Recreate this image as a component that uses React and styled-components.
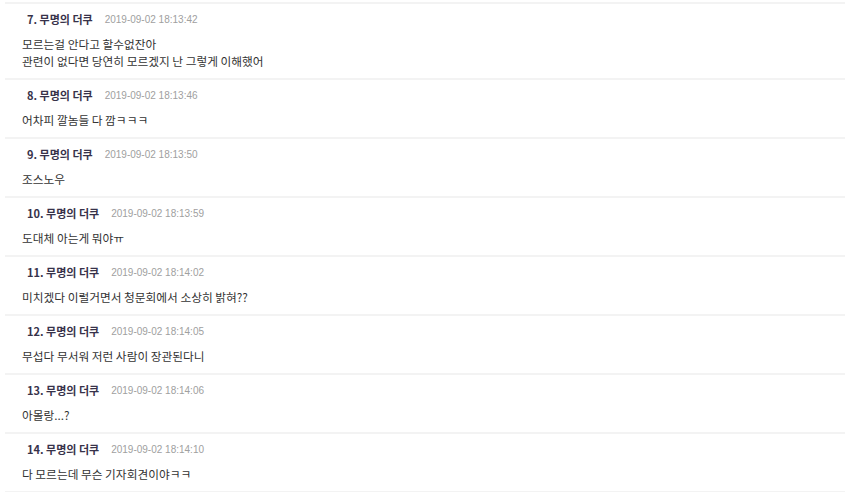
import styled, { createGlobalStyle } from "styled-components";

const GlobalStyle = createGlobalStyle`
  body {
    margin: 0;
    background: #fff;
    font-family: "Noto Sans CJK KR", "Noto Sans", sans-serif;
  }
`;

const comments = [
  { no: 7, time: "2019-09-02 18:13:42", lines: ["모르는걸 안다고 할수없잔아", "관련이 없다면 당연히 모르겠지 난 그렇게 이해했어"] },
  { no: 8, time: "2019-09-02 18:13:46", lines: ["어차피 깔놈들 다 깜ㅋㅋㅋ"] },
  { no: 9, time: "2019-09-02 18:13:50", lines: ["조스노우"] },
  { no: 10, time: "2019-09-02 18:13:59", lines: ["도대체 아는게 뭐야ㅠ"] },
  { no: 11, time: "2019-09-02 18:14:02", lines: ["미치겠다 이럴거면서 청문회에서 소상히 밝혀??"] },
  { no: 12, time: "2019-09-02 18:14:05", lines: ["무섭다 무서워 저런 사람이 장관된다니"] },
  { no: 13, time: "2019-09-02 18:14:06", lines: ["아몰랑...?"] },
  { no: 14, time: "2019-09-02 18:14:10", lines: ["다 모르는데 무슨 기자회견이야ㅋㅋ"] },
];

const App = () => {
  return (
    <>
      <GlobalStyle />
      <CommentList>
        {comments.map((item) => (
          <Comment key={item.no}>
            <Header>
              <Author>
                {item.no}. 무명의 더쿠
              </Author>
              <Time>{item.time}</Time>
            </Header>
            <Body>
              {item.lines.map((line, i) => (
                <div key={i}>{line}</div>
              ))}
            </Body>
          </Comment>
        ))}
      </CommentList>
    </>
  );
};

const CommentList = styled.ul`
  list-style: none;
  margin: 2px 5px 0;
  padding: 0;
  border-top: 2px solid #f3f3f3;
`;

const Comment = styled.li`
  padding: 7px 0 9px;
  border-bottom: 2px solid #f3f3f3;
`;

const Header = styled.div`
  display: flex;
  align-items: center;
  gap: 12px;
  padding-left: 22px;
  height: 16px;
`;

const Author = styled.span`
  font-size: 11px;
  font-weight: 700;
  color: #37324a;
`;

const Time = styled.span`
  font-family: "Liberation Sans", Arial, sans-serif;
  font-size: 10px;
  color: #a0a0a0;
`;

const Body = styled.div`
  margin-top: 8px;
  padding-left: 17px;
  font-size: 11.7px;
  line-height: 17px;
  color: #333;
`;

export default App;
